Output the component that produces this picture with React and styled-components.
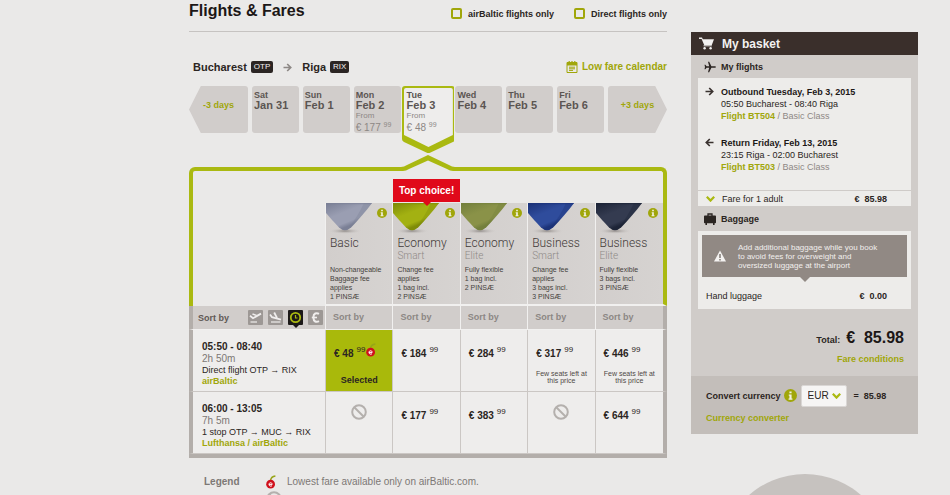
import React, { useState } from "react";
import styled, { createGlobalStyle, css } from "styled-components";

const lime = "#aab911";
const limeText = "#a0a60a";
const grey = "#d1cdcb";
const frame = "#b3aeaa";
const line = "#cbc7c4";

const GlobalStyle = createGlobalStyle`
  * {
    box-sizing: border-box;
  }
  body {
    margin: 0;
    background: #eae9e8;
    color: #2b2522;
    font-family: "Liberation Sans", Arial, sans-serif;
    font-size: 9px;
    line-height: 12px;
  }
  a {
    color: ${limeText};
    font-weight: bold;
    text-decoration: none;
  }
  button {
    font-family: inherit;
    padding: 0;
    border: 0;
    background: none;
    cursor: pointer;
  }
  svg {
    display: block;
    flex: none;
  }
`;

const Page = styled.div`
  display: grid;
  grid-template-columns: minmax(0, 1fr) 227px;
  column-gap: 24px;
  height: 100vh;
  padding: 0 32px 0 189px;
  overflow: hidden;
`;

const Header = styled.header`
  display: flex;
  align-items: center;
  justify-content: space-between;
  height: 32px;
  padding-bottom: 10px;
  border-bottom: 1px solid #c6c3c1;
  h1 {
    margin: 0;
    font-size: 16px;
    line-height: 20px;
    color: #1c1716;
  }
`;

const Filters = styled.div`
  display: flex;
  gap: 20px;
  padding-top: 6px;
`;

const Filter = styled.label`
  display: flex;
  align-items: center;
  gap: 6px;
  font-size: 9px;
  font-weight: bold;
  input {
    appearance: none;
    width: 11px;
    height: 11px;
    margin: 0;
    border: 2px solid ${limeText};
    border-radius: 2px;
  }
  input:checked {
    background: ${lime};
  }
`;

const Route = styled.div`
  display: flex;
  align-items: center;
  height: 14px;
  margin: 28px 0 12px;
  padding-left: 4px;
  font-size: 11px;
  font-weight: bold;
  > svg {
    margin: 0 10px;
  }
  a {
    display: flex;
    align-items: center;
    gap: 4px;
    margin-left: auto;
    font-size: 10px;
  }
`;

const Code = styled.span`
  margin-left: 4px;
  padding: 0 3px;
  border-radius: 2px;
  background: #2b2523;
  color: #f4f2f1;
  font-size: 8px;
  font-weight: normal;
`;

const Days = styled.div`
  display: grid;
  grid-template-columns: 59px repeat(7, minmax(0, 1fr)) 59px;
  gap: 4px;
  height: 47px;
`;

const Shift = styled.button`
  color: ${limeText};
  font-size: 9px;
  font-weight: bold;
  line-height: 12px;
  padding-bottom: 10px;
  background: ${grey};
  border-radius: 3px;
  clip-path: ${({ $next }) =>
    $next
      ? "polygon(0 0, 80% 0, 100% 50%, 80% 100%, 0 100%)"
      : "polygon(20% 0, 100% 0, 100% 100%, 20% 100%, 0 50%)"};
`;

const DayButton = styled.button`
  position: relative;
  display: flex;
  flex-direction: column;
  align-items: flex-start;
  padding: 5px 0 0 2px;
  border-radius: 3px;
  background: ${({ $active }) => ($active ? "none" : grey)};
  color: #5b5552;
  font-size: 9px;
  line-height: 9px;
  text-align: left;
  > svg {
    position: absolute;
    top: 0;
    left: -3px;
    width: calc(100% + 6px);
    height: 67px;
  }
  b,
  strong,
  small,
  span {
    position: relative;
  }
  strong {
    font-size: 11px;
    line-height: 11px;
    font-weight: bold;
  }
  small {
    font-size: 8px;
    line-height: 10px;
    color: #8d8885;
  }
  span {
    font-size: 10px;
    line-height: 11px;
    color: #8d8885;
    white-space: nowrap;
  }
  sup {
    font-size: 7px;
    line-height: 7px;
    vertical-align: 4px;
  }
`;

const PanelTop = styled.div`
  position: relative;
  height: 36px;
  margin-top: 34px;
  border: 4px solid ${lime};
  border-bottom: 0;
  border-radius: 6px 6px 0 0;
  svg {
    position: absolute;
    left: calc(50% - 30px);
    top: -17px;
  }
`;

const Fares = styled.table`
  width: 100%;
  table-layout: fixed;
  border-spacing: 0;
  border-bottom: 4px solid ${frame};
  th,
  td {
    padding: 0;
    font-weight: normal;
    text-align: left;
    vertical-align: top;
  }
  th:first-child,
  td:first-child {
    border-left: 4px solid ${frame};
  }
  th:last-child,
  td:last-child {
    border-right: 4px solid ${frame};
  }
  tr.classes > :first-child {
    width: 136px;
    border-left-color: ${lime};
  }
  tr.classes > :last-child {
    width: auto;
    border-right-color: ${lime};
  }
`;

const ClassHead = styled.th`
  position: relative;
  width: 14.1%;
  height: 103px;
  border-left: 1px solid #f1f0ef;
  border-bottom: 2px solid #f1f0ef;
  background: linear-gradient(90deg, #d2cecc, #d6d3d1);
`;

const Gem = styled.div`
  display: flex;
  justify-content: space-between;
  height: 34px;
  padding-right: 5px;
  > button {
    height: 11px;
    margin-top: 4px;
  }
`;

const ClassName = styled.div`
  height: 28px;
  padding-left: 4px;
  font-family: Roboto, "Liberation Sans", sans-serif;
  font-weight: 300;
  font-size: 12px;
  line-height: 13px;
  color: #3f3937;
  small {
    display: block;
    font-size: 10px;
    line-height: 11px;
    color: #8f8a87;
  }
`;

const Terms = styled.div`
  padding-left: 4px;
  font-size: 7px;
  line-height: 9px;
  color: #453f3c;
  white-space: pre-line;
`;

const TopChoice = styled.div`
  position: absolute;
  top: -24px;
  left: 0;
  right: 0;
  height: 23px;
  background: #e0091a;
  color: #fff;
  font-size: 10px;
  font-weight: bold;
  line-height: 23px;
  text-align: center;
  white-space: nowrap;
  &::after {
    content: "";
    position: absolute;
    top: 23px;
    left: calc(50% - 4px);
    border: 4px solid transparent;
    border-top-color: #e0091a;
    border-bottom: 0;
  }
`;

const SortCell = styled.td`
  height: 24px;
  border-bottom: 1px solid #f1f0ef;
  background: ${grey};
  & + & {
    border-left: 1px solid #f1f0ef;
  }
  > button {
    padding-left: 7px;
    color: #8c8784;
    font-size: 9px;
    font-weight: bold;
    line-height: 23px;
  }
`;

const SortBar = styled.div`
  display: flex;
  align-items: center;
  gap: 5px;
  height: 23px;
  padding: 0 2px 0 5px;
  span {
    margin-right: auto;
    font-size: 9px;
    font-weight: bold;
    color: #5f5956;
  }
`;

const SortIcon = styled.button`
  position: relative;
  height: 15px;
  ${({ $active }) =>
    $active &&
    css`
      &::after {
        content: "";
        position: absolute;
        top: 15px;
        left: 5px;
        border: 3px solid transparent;
        border-top-color: #1b1817;
        border-bottom: 0;
      }
    `}
`;

const FlightCell = styled.th`
  height: 62px;
  background: #eeedec;
  border-bottom: 1px solid ${line};
  font-size: 9px;
  line-height: 11px;
  div {
    padding: 11px 0 0 9px;
  }
  b {
    display: block;
    font-size: 10px;
    line-height: 12px;
  }
  em {
    display: block;
    font-size: 10px;
    line-height: 12px;
    font-style: normal;
    color: #7d7875;
  }
  a {
    display: block;
  }
`;

const FareCell = styled.td`
  height: 62px;
  border-left: 1px solid ${line};
  border-bottom: 1px solid ${line};
  background: ${({ $selected }) => ($selected ? "#a9b90b" : "#eeedec")};
`;

const FareButton = styled.button`
  display: flex;
  flex-direction: column;
  align-items: stretch;
  justify-content: flex-start;
  width: 100%;
  height: 60px;
  padding-top: 14px;
  color: #2b2522;
  text-align: center;
`;

const Price = styled.span`
  display: flex;
  align-items: center;
  height: 18px;
  padding-left: 8px;
  font-size: 10px;
  font-weight: bold;
  white-space: nowrap;
  sup {
    margin: 0 0 6px 3px;
    font-size: 8px;
    line-height: 8px;
    font-weight: normal;
    vertical-align: baseline;
  }
  svg {
    margin: 0 0 6px 1px;
  }
`;

const Seats = styled.small`
  padding: 8px 4px 0;
  font-size: 7px;
  line-height: 7px;
  color: #4f4946;
`;

const Chosen = styled.b`
  padding-top: 12px;
  font-size: 9px;
  line-height: 12px;
`;

const NoFare = styled.div`
  display: flex;
  justify-content: center;
  padding-top: 12px;
`;

const Legend = styled.dl`
  display: grid;
  grid-template-columns: 62px 21px 1fr;
  row-gap: 2px;
  align-items: center;
  margin: 17px 0 0;
  padding-left: 15px;
  font-size: 10px;
  color: #7d7875;
  dt {
    font-weight: bold;
  }
  dd {
    margin: 0;
  }
`;

/* ---- basket ---- */

const Basket = styled.aside`
  padding-top: 32px;
`;

const BasketTitle = styled.h2`
  display: flex;
  align-items: center;
  gap: 8px;
  height: 23px;
  margin: 0;
  padding-left: 8px;
  background: #3a2f2b;
  color: #f3f1f0;
  font-size: 12px;
`;

const BasketBody = styled.div`
  padding: 0 7px;
  background: #d0ccc9;
`;

const SectionTitle = styled.h3`
  display: grid;
  grid-template-columns: 17px 1fr;
  align-items: center;
  justify-items: start;
  height: ${({ $tall }) => ($tall ? "25px" : "23px")};
  margin: 0;
  padding-left: 6px;
  font-size: 9px;
`;

const Card = styled.div`
  background: #edecea;
`;

const Leg = styled.div`
  display: grid;
  grid-template-columns: 16px 1fr;
  height: 51px;
  padding-left: 7px;
  > svg {
    margin-top: 1px;
  }
  b {
    display: block;
    color: #1c1716;
  }
  small {
    font-size: 9px;
    color: #8d8885;
  }
`;

const Legs = styled.div`
  padding: 8px 0 2px;
`;

const FareLine = styled.div`
  display: flex;
  align-items: center;
  height: ${({ $tall }) => ($tall ? "27px" : "16px")};
  padding: 0 24px 0 8px;
  border-top: ${({ $tall }) => ($tall ? "0" : "1px solid #cfcbc8")};
  svg {
    margin-right: 7px;
  }
  b {
    margin-left: auto;
    white-space: pre;
  }
`;

const BaggageCard = styled(Card)`
  padding: 4px 4px 0;
  height: 78px;
  ${FareLine} {
    padding: 0 20px 0 4px;
    margin-top: 5px;
  }
`;

const Notice = styled.div`
  position: relative;
  display: flex;
  align-items: center;
  gap: 12px;
  height: 42px;
  padding-left: 12px;
  background: #918984;
  color: #f1efee;
  font-size: 8px;
  line-height: 9px;
  p {
    margin: 0;
  }
  &::after {
    content: "";
    position: absolute;
    top: 100%;
    left: calc(50% - 5px);
    border: 5px solid transparent;
    border-top-color: #918984;
    border-bottom: 0;
  }
`;

const Total = styled.div`
  display: flex;
  flex-direction: column;
  align-items: flex-end;
  height: 67px;
  padding: 19px 7px 0 0;
  font-weight: bold;
  font-size: 9px;
  p {
    display: flex;
    align-items: baseline;
    gap: 6px;
    margin: 0 0 3px;
    line-height: 20px;
  }
  strong {
    font-size: 16px;
    white-space: pre;
    color: #1c1716;
  }
`;

const Currency = styled.div`
  height: 58px;
  padding: 8px 15px 0;
  background: #c3beba;
  font-weight: bold;
  > div {
    display: flex;
    align-items: center;
    height: 23px;
    margin-bottom: 5px;
  }
  button {
    margin: 0 4px 0 3px;
  }
`;

const SelectBox = styled.span`
  position: relative;
  width: 46px;
  margin-right: 7px;
  select {
    appearance: none;
    width: 100%;
    height: 22px;
    padding: 0 0 0 6px;
    border: 1px solid #dad7d5;
    border-radius: 2px;
    background: #f6f5f4;
    color: #2b2522;
    font: 10px "Liberation Sans", Arial, sans-serif;
  }
  svg {
    position: absolute;
    right: 6px;
    top: 8px;
    pointer-events: none;
  }
`;

const Disc = styled.div`
  width: 170px;
  height: 170px;
  margin: 40px auto 0;
  border-radius: 50%;
  background: #c6c2bf;
`;

const Info = ({ size = 10 }) => (
  <svg width={size} height={size} viewBox="0 0 12 12">
    <circle cx="6" cy="6" r="6" fill={limeText} />
    <path d="M5 2.2h2v1.8H5zM4.4 5H7v3.8h.8V10H4.2V8.8H5V6.2h-.6z" fill="#f1f0e0" />
  </svg>
);

const Arrow = ({ left, color = "#3a322f", size = 9 }) => (
  <svg width={size} height={size} viewBox="0 0 9 9">
    <path
      d={left ? "M8.5 4.5H1.5M4.8 1 1.3 4.5 4.8 8" : "M.5 4.5h7M4.2 1l3.5 3.5L4.2 8"}
      fill="none"
      stroke={color}
      strokeWidth="1.7"
    />
  </svg>
);

const Chevron = () => (
  <svg width="9" height="6" viewBox="0 0 9 6">
    <path d="M.8.8 4.5 4.6 8.2.8" fill="none" stroke={lime} strokeWidth="2.2" />
  </svg>
);

const Cherry = () => (
  <svg width="10" height="14" viewBox="0 0 10 14">
    <path d="M4.6 5.5C4.8 3 6.2 1.4 9.4 1" fill="none" stroke="#97a51a" strokeWidth="1.5" />
    <circle cx="4.6" cy="9.2" r="4.4" fill="#d0101c" />
    <path d="M3 9.4h3.2C6.2 7.2 3 7.2 3 9.4c0 1.8 2 2.2 3 1.3" fill="none" stroke="#fff" strokeWidth="1" />
  </svg>
);

const Unavailable = () => (
  <svg width="16" height="16" viewBox="0 0 16 16" role="img" aria-label="Not available">
    <circle cx="8" cy="8" r="6.8" fill="none" stroke="#b4b0ad" strokeWidth="2" />
    <path d="m3.500 3.500 9 9" stroke="#b4b0ad" strokeWidth="2" />
  </svg>
);

const CalendarIcon = () => (
  <svg width="12" height="12" viewBox="0 0 12 12">
    <path d="M1 1.5h10v10H1z" fill="none" stroke={limeText} />
    <path d="M1 2h10v2.4H1zM2.6 0h1.2v2H2.6zM5.4 0h1.2v2H5.4zM8.2 0h1.2v2H8.2z" fill={limeText} />
    <path d="M3 6.2h6M3 7.8h6M3 9.4h4" stroke={limeText} />
  </svg>
);

const Diamond = ({ id, light, dark }) => (
  <svg width="47" height="34" viewBox="0 0 47 34">
    <defs>
      <linearGradient id={id} x1="0.2" y1="0" x2="0.75" y2="0.7">
        <stop offset="0" stopColor={dark} />
        <stop offset="0.5" stopColor={light} />
        <stop offset="0.85" stopColor={light} />
        <stop offset="1" stopColor={dark} />
      </linearGradient>
      <radialGradient id={id + "-shade"}>
        <stop offset="0" stopColor="#8f8a87" />
        <stop offset="1" stopColor="#d3cfcd" stopOpacity="0" />
      </radialGradient>
    </defs>
    <ellipse cx="19" cy="28" rx="17" ry="3" fill={`url(#${id}-shade)`} />
    <path d="M-8 0H46C40 8 32 17 25 24.500Q19 30 13 24.500C6 17 -2 8 -8 0Z" fill={`url(#${id})`} />
    <path d="M38 0H46C40 8 32 17 25 24.500L22 26C28 18 34 9 38 0Z" fill={dark} opacity="0.35" />
    <path d="M0 0H46L45 1.200H0Z" fill={dark} opacity="0.6" />
  </svg>
);

const sortIcons = {
  departure: (
    <>
      <path d="M2.500 12h6.500" strokeWidth="1.200" />
      <path d="M2 5.800 5 8.200 13 3.600" />
      <path d="M4.500 4 8.500 5.400" strokeWidth="1.400" />
    </>
  ),
  arrival: (
    <>
      <path d="M3 12h9.500" strokeWidth="1.200" />
      <path d="M2 4.500 4 7.200 13 9.600" />
      <path d="M6.200 2.500 9 7.800" />
    </>
  ),
  duration: (
    <>
      <circle cx="7.5" cy="7.5" r="4.7" />
      <path d="M7.5 5v3H9.500" strokeWidth="1.2" />
    </>
  ),
  price: (
    <>
      <path d="M11 3.800C8.500 2.400 5.400 3.200 5.400 7.500s3.100 5.100 5.600 3.700" strokeWidth="2" />
      <path d="M3.800 7.500H9" strokeWidth="1.600" />
    </>
  ),
};

const SortGlyph = ({ name, active }) => (
  <svg width="15" height="15" viewBox="0 0 15 15">
    <rect width="15" height="15" rx="1" fill={active ? "#1b1817" : "#9d9895"} />
    <g fill="none" stroke={active ? lime : "#f0eeed"} strokeWidth="1.8">
      {sortIcons[name]}
    </g>
  </svg>
);

const days = [
  { day: "Sat", date: "Jan 31" },
  { day: "Sun", date: "Feb 1" },
  { day: "Mon", date: "Feb 2", from: 177 },
  { day: "Tue", date: "Feb 3", from: 48 },
  { day: "Wed", date: "Feb 4" },
  { day: "Thu", date: "Feb 5" },
  { day: "Fri", date: "Feb 6" },
];

const classes = [
  { name: "Basic", terms: "Non-changeable\nBaggage fee\napplies\n1 PINSÆ", light: "#9a9eb2", dark: "#7b8096" },
  { name: "Economy", kind: "Smart", terms: "Change fee\napplies\n1 bag incl.\n2 PINSÆ", light: "#a3b112", dark: "#7f8c08", top: true },
  { name: "Economy", kind: "Elite", terms: "Fully flexible\n1 bag incl.\n2 PINSÆ", light: "#8a9248", dark: "#74803c" },
  { name: "Business", kind: "Smart", terms: "Change fee\napplies\n3 bags incl.\n3 PINSÆ", light: "#2f4c9c", dark: "#1c3379" },
  { name: "Business", kind: "Elite", terms: "Fully flexible\n3 bags incl.\n3 PINSÆ", light: "#343b50", dark: "#1d2437" },
];

const flights = [
  {
    time: "05:50 - 08:40",
    length: "2h 50m",
    stops: "Direct flight OTP → RIX",
    carrier: "airBaltic",
    fares: [{ price: 48, lowest: true }, { price: 184 }, { price: 284 }, { price: 317, few: true }, { price: 446, few: true }],
  },
  {
    time: "06:00 - 13:05",
    length: "7h 5m",
    stops: "1 stop OTP → MUC → RIX",
    carrier: "Lufthansa / airBaltic",
    fares: [null, { price: 177 }, { price: 383 }, null, { price: 644 }],
  },
];

const FareTable = () => {
  const [sort, setSort] = useState("duration");
  const [selected, setSelected] = useState("0-0");

  return (
    <Fares>
      <thead>
        <tr className="classes">
          <td></td>
          {classes.map((c, i) => (
            <ClassHead key={i} scope="col">
              {c.top && <TopChoice>Top choice!</TopChoice>}
              <Gem>
                <Diamond id={"gem" + i} light={c.light} dark={c.dark} />
                <button aria-label="Fare details">
                  <Info />
                </button>
              </Gem>
              <ClassName>
                {c.name}
                <small>{c.kind}</small>
              </ClassName>
              <Terms>{c.terms}</Terms>
            </ClassHead>
          ))}
        </tr>
        <tr>
          <SortCell>
            <SortBar>
              <span>Sort by</span>
              {Object.keys(sortIcons).map((name) => (
                <SortIcon key={name} $active={sort === name} aria-label={name} onClick={() => setSort(name)}>
                  <SortGlyph name={name} active={sort === name} />
                </SortIcon>
              ))}
            </SortBar>
          </SortCell>
          {classes.map((c, i) => (
            <SortCell key={i}>
              <button>Sort by</button>
            </SortCell>
          ))}
        </tr>
      </thead>
      <tbody>
        {flights.map((f, row) => (
          <tr key={f.time}>
            <FlightCell scope="row">
              <div>
                <b>{f.time}</b>
                <em>{f.length}</em>
                {f.stops}
                <a href="#carrier">{f.carrier}</a>
              </div>
            </FlightCell>
            {f.fares.map((fare, col) => {
              const id = row + "-" + col;
              return (
                <FareCell key={id} $selected={selected === id}>
                  {fare ? (
                    <FareButton onClick={() => setSelected(id)}>
                      <Price>
                        € {fare.price} <sup>99</sup>
                        {fare.lowest && <Cherry />}
                      </Price>
                      {fare.few && <Seats>Few seats left at this price</Seats>}
                      {selected === id && <Chosen>Selected</Chosen>}
                    </FareButton>
                  ) : (
                    <NoFare>
                      <Unavailable />
                    </NoFare>
                  )}
                </FareCell>
              );
            })}
          </tr>
        ))}
      </tbody>
    </Fares>
  );
};

const MyBasket = () => (
  <Basket>
    <BasketTitle>
      <svg width="15" height="13" viewBox="0 0 15 13">
        <path d="M0 .5h3l.8 1.700H15L12.800 8H5.200L2.600 2H0z" fill="#f3f1f0" />
        <path d="M4.600 8.800h8.200" stroke="#f3f1f0" />
        <circle cx="5.6" cy="11.3" r="1.2" fill="#f3f1f0" />
        <circle cx="11.6" cy="11.3" r="1.2" fill="#f3f1f0" />
      </svg>
      My basket
    </BasketTitle>
    <BasketBody>
      <SectionTitle>
        <svg width="12" height="12" viewBox="0 0 12 12">
          <path
            d="M12 6c0 .5-.7.8-1.400.8H7.400L5.200 11.200H4L5.200 6.800H2.600L1.400 8.200H.5L1 6 .5 3.800h.9l1.200 1.400h2.600L4 .8h1.200l2.200 4.400h3.200c.7 0 1.400.3 1.400.8z"
            fill="#2b2522"
          />
        </svg>
        My flights
      </SectionTitle>
      <Card>
        <Legs>
          <Leg>
            <Arrow />
            <div>
              <b>Outbound Tuesday, Feb 3, 2015</b>
              05:50 Bucharest - 08:40 Riga
              <br />
              <a href="#bt504">Flight BT504</a> <small>/ Basic Class</small>
            </div>
          </Leg>
          <Leg>
            <Arrow left />
            <div>
              <b>Return Friday, Feb 13, 2015</b>
              23:15 Riga - 02:00 Bucharest
              <br />
              <a href="#bt503">Flight BT503</a> <small>/ Basic Class</small>
            </div>
          </Leg>
        </Legs>
        <FareLine>
          <Chevron />
          Fare for 1 adult
          <b>€  85.98</b>
        </FareLine>
      </Card>
      <SectionTitle $tall>
        <svg width="12" height="12" viewBox="0 0 12 12">
          <path d="M4 3V1h4v2" fill="none" stroke="#2b2522" strokeWidth="1.3" />
          <path d="M0 3.400Q0 2.600.8 2.600h10.400q.8 0 .8.800V9.500q0 .8-.8.800H.8Q0 10.300 0 9.500zM1.400 10.300h1.600V12H1.400zM9 10.300h1.600V12H9z" fill="#2b2522" />
        </svg>
        Baggage
      </SectionTitle>
      <BaggageCard>
        <Notice>
          <svg width="12" height="12" viewBox="0 0 12 12">
            <path d="M6 .5 12 11.500H0z" fill="#f4f2f1" />
            <path d="M6 4v4M6 9v1.400" stroke="#6e6661" strokeWidth="1.3" />
          </svg>
          <p>
            Add additional baggage while you book
            <br />
            to avoid fees for overweight and
            <br />
            oversized luggage at the airport
          </p>
        </Notice>
        <FareLine $tall>
          Hand luggage
          <b>€  0.00</b>
        </FareLine>
      </BaggageCard>
      <Total>
        <p>
          Total: <strong>€  85.98</strong>
        </p>
        <a href="#conditions">Fare conditions</a>
      </Total>
    </BasketBody>
    <Currency>
      <div>
        <label htmlFor="currency">Convert currency</label>
        <button aria-label="About currency conversion">
          <Info size={13} />
        </button>
        <SelectBox>
          <select id="currency" defaultValue="EUR">
            <option>EUR</option>
          </select>
          <Chevron />
        </SelectBox>
        = &nbsp;85.98
      </div>
      <a href="#converter">Currency converter</a>
    </Currency>
    <Disc />
  </Basket>
);

const App = () => {
  const [active, setActive] = useState("Feb 3");

  return (
    <>
      <GlobalStyle />
      <Page>
        <main>
          <Header>
            <h1>Flights &amp; Fares</h1>
            <Filters>
              <Filter>
                <input type="checkbox" />
                airBaltic flights only
              </Filter>
              <Filter>
                <input type="checkbox" />
                Direct flights only
              </Filter>
            </Filters>
          </Header>
          <Route>
            Bucharest<Code>OTP</Code>
            <Arrow color="#8d8885" />
            Riga<Code>RIX</Code>
            <a href="#calendar">
              <CalendarIcon />
              Low fare calendar
            </a>
          </Route>
          <Days>
            <Shift>-3 days</Shift>
            {days.map((d) => (
              <DayButton key={d.date} $active={active === d.date} onClick={() => setActive(d.date)}>
                {active === d.date && (
                  <svg viewBox="0 0 53 67" preserveAspectRatio="none">
                    <path d="M0 3Q0 0 3 0H50Q53 0 53 3V53Q53 55 51 56L26.500 67.500 2 56Q0 55 0 53Z" fill={lime} />
                    <path d="M2 4Q2 2 4 2H49Q51 2 51 4V49L26.500 61 2 49Z" fill="#eeedec" />
                  </svg>
                )}
                <b>{d.day}</b>
                <strong>{d.date}</strong>
                {d.from && <small>From</small>}
                {d.from && (
                  <span>
                    € {d.from} <sup>99</sup>
                  </span>
                )}
              </DayButton>
            ))}
            <Shift $next>+3 days</Shift>
          </Days>
          <PanelTop>
            <svg width="60" height="18" viewBox="0 0 60 18">
              <path d="M5 13H55V18H5Z" fill="#eae9e8" />
              <path d="M0 13H3Q6 13 9 11L30 1 51 11Q54 13 57 13H60V17H55Q52 17 49 15L30 6.500 11 15Q8 17 5 17H0Z" fill={lime} />
            </svg>
          </PanelTop>
          <FareTable />
          <Legend>
            <dt>Legend</dt>
            <dd>
              <Cherry />
            </dd>
            <dd>Lowest fare available only on airBaltic.com.</dd>
            <dt></dt>
            <dd>
              <Unavailable />
            </dd>
          </Legend>
        </main>
        <MyBasket />
      </Page>
    </>
  );
};

export default App;
